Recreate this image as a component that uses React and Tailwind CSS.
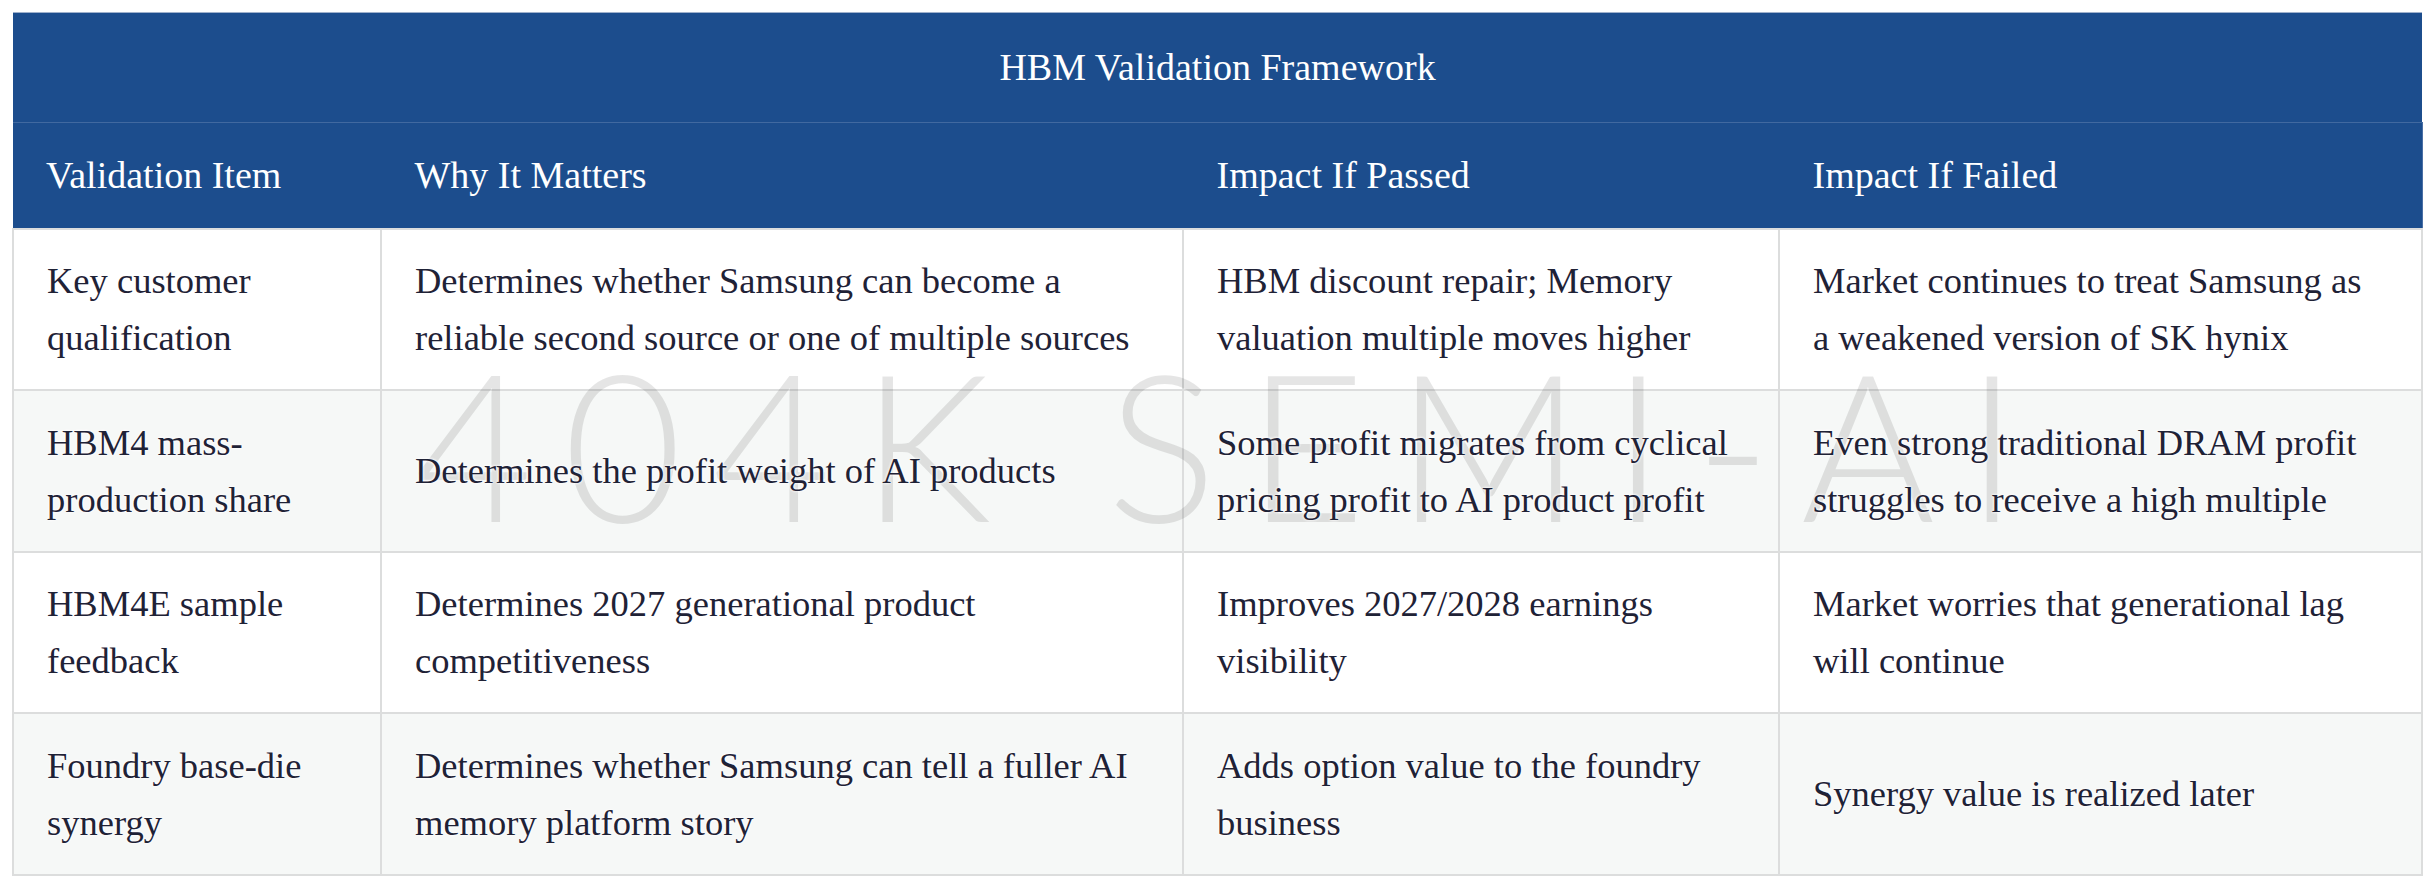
import React from "react";

const rows = [
  {
    item: ["Key customer", "qualification"],
    why: ["Determines whether Samsung can become a", "reliable second source or one of multiple sources"],
    passed: ["HBM discount repair; Memory", "valuation multiple moves higher"],
    failed: ["Market continues to treat Samsung as", "a weakened version of SK hynix"],
  },
  {
    item: ["HBM4 mass-", "production share"],
    why: ["Determines the profit weight of AI products"],
    passed: ["Some profit migrates from cyclical", "pricing profit to AI product profit"],
    failed: ["Even strong traditional DRAM profit", "struggles to receive a high multiple"],
  },
  {
    item: ["HBM4E sample", "feedback"],
    why: ["Determines 2027 generational product", "competitiveness"],
    passed: ["Improves 2027/2028 earnings", "visibility"],
    failed: ["Market worries that generational lag", "will continue"],
  },
  {
    item: ["Foundry base-die", "synergy"],
    why: ["Determines whether Samsung can tell a fuller AI", "memory platform story"],
    passed: ["Adds option value to the foundry", "business"],
    failed: ["Synergy value is realized later"],
  },
];

const Cell = ({ lines }) => (
  <td className="border-2 border-[#dcdddd] px-[33px] py-0 align-middle">
    <div className="relative z-10 [text-shadow:0_0_3px_#fff,0_0_3px_#fff]">
      {lines.map((l, i) => (
        <div key={i} className="whitespace-nowrap">
          {l}
        </div>
      ))}
    </div>
  </td>
);

const App = () => {
  return (
    <div className="w-full min-h-screen bg-white p-3">
      <div className="relative w-[2409px]">
        <table
          className="w-[2409px] table-fixed border-collapse text-left text-[36.5px] leading-[57px] text-[#1f2236]"
          style={{ fontFamily: '"Liberation Serif", "Times New Roman", serif' }}
        >
          <colgroup>
            <col className="w-[368px]" />
            <col className="w-[802px]" />
            <col className="w-[596px]" />
            <col className="w-[643px]" />
          </colgroup>
          <thead className="bg-[#1c4d8d] text-white">
            <tr className="h-[110px] border-t border-[#9fb1cc]">
              <th
                colSpan={4}
                className="border-b border-[#4169a0] text-center font-normal text-[38px]"
              >
                HBM Validation Framework
              </th>
            </tr>
            <tr className="h-[106px] border-b border-[#8fa5c8]">
              <th className="px-[33px] font-normal text-[38px] border-r border-[#1c4d8d]">Validation Item</th>
              <th className="px-[33px] font-normal text-[38px] border-r border-[#1c4d8d]">Why It Matters</th>
              <th className="px-[33px] font-normal text-[38px] border-r border-[#1c4d8d]">Impact If Passed</th>
              <th className="px-[33px] font-normal text-[38px] border-r border-[#4a6fa5]">Impact If Failed</th>
            </tr>
          </thead>
          <tbody>
            {rows.map((r, i) => (
              <tr key={i} className={`h-[161.5px] ${i % 2 === 1 ? "bg-[#f6f8f7]" : "bg-white"}`}>
                <Cell lines={r.item} />
                <Cell lines={r.why} />
                <Cell lines={r.passed} />
                <Cell lines={r.failed} />
              </tr>
            ))}
          </tbody>
        </table>
        <div className="pointer-events-none absolute inset-0 flex items-center justify-center">
          <span
            className="pl-[30px] text-[205px] font-light leading-none tracking-[30px] text-[rgba(0,0,0,0.1)] whitespace-nowrap"
            style={{ fontFamily: '"Lato", "Liberation Sans", sans-serif' }}
          >
            404K SEMI-AI
          </span>
        </div>
      </div>
    </div>
  );
};

export default App;
